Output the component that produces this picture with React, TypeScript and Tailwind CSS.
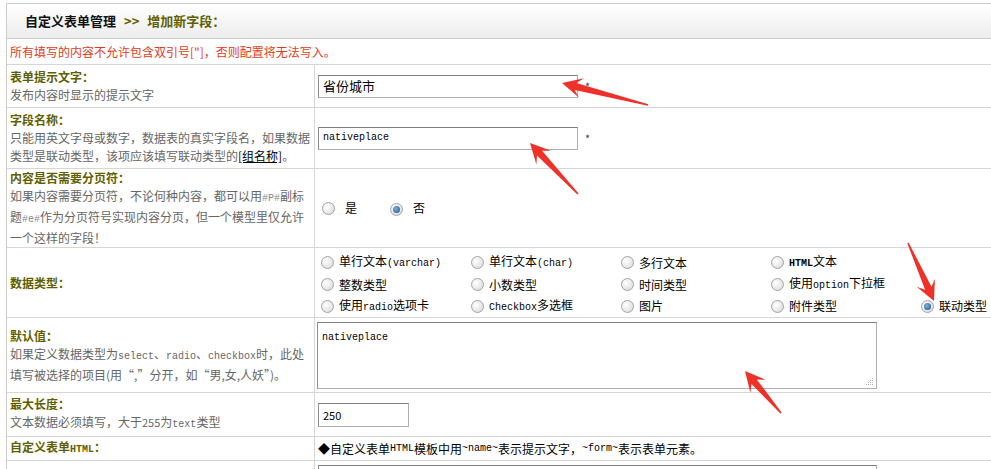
import type { ReactNode } from 'react';

const M = ({ children, className = '' }: { children: ReactNode; className?: string }) => (
    <span className={`font-['Liberation_Mono','DejaVu_Sans_Mono',monospace] text-[10px] ${className}`}>{children}</span>
);

function Radio({ checked = false }: { checked?: boolean }) {
    return (
        <span className="inline-flex w-[13px] h-[13px] rounded-full border border-[#a3a3a3] bg-[radial-gradient(circle_at_35%_35%,#ffffff,#d6d6d6)] items-center justify-center shrink-0">
            {checked && (
                <span className="w-[7px] h-[7px] rounded-full bg-[radial-gradient(circle_at_40%_40%,#7fb4e4,#174c82)]" />
            )}
        </span>
    );
}

function Label({ children }: { children: ReactNode }) {
    return <div className="font-bold text-[#5f5f00]">{children}</div>;
}

function Desc({ children }: { children: ReactNode }) {
    return <div className="text-[#666666]">{children}</div>;
}

function arrowPoints(tx: number, ty: number, hx: number, hy: number) {
    const dx = hx - tx;
    const dy = hy - ty;
    const len = Math.hypot(dx, dy);
    const ux = dx / len;
    const uy = dy / len;
    const px = -uy;
    const py = ux;
    const headLen = 20;
    const headW = 10;
    const neckBack = 14;
    const bx = hx - ux * headLen;
    const by = hy - uy * headLen;
    const nx = hx - ux * neckBack;
    const ny = hy - uy * neckBack;
    const pts = [
        [tx + px * 0.8, ty + py * 0.8],
        [nx + px * 3.5, ny + py * 3.5],
        [bx + px * headW, by + py * headW],
        [hx, hy],
        [bx - px * headW, by - py * headW],
        [nx - px * 3.5, ny - py * 3.5],
        [tx - px * 0.8, ty - py * 0.8],
    ];
    return pts.map((p) => `${p[0].toFixed(1)},${p[1].toFixed(1)}`).join(' ');
}

const arrows = [
    { tail: [648, 105], head: [562, 83] },
    { tail: [578, 194], head: [530, 143] },
    { tail: [908, 243], head: [934, 301] },
    { tail: [781, 413], head: [745, 371] },
];

const types: { text: ReactNode; checked?: boolean }[][] = [
    [
        { text: <>单行文本<M>(varchar)</M></> },
        { text: <>单行文本<M>(char)</M></> },
        { text: <>多行文本</> },
        { text: <><M className="font-bold">HTML</M>文本</> },
        { text: null },
    ],
    [
        { text: <>整数类型</> },
        { text: <>小数类型</> },
        { text: <>时间类型</> },
        { text: <>使用<M>option</M>下拉框</> },
        { text: null },
    ],
    [
        { text: <>使用<M>radio</M>选项卡</> },
        { text: <><M>Checkbox</M>多选框</> },
        { text: <>图片</> },
        { text: <>附件类型</> },
        { text: <>联动类型</>, checked: true },
    ],
];

export default function App() {
    return (
        <div className="relative w-[991px] h-[469px] overflow-hidden bg-white pt-[3px] pl-[6px] font-['Noto_Sans_CJK_SC','Noto_Sans',sans-serif] text-[12px] leading-[18px] text-black">
            <div className="w-[1000px] border-l border-t border-[#cccccc]">
                {/* header */}
                <div className="h-[35px] flex items-center pl-[18px] border-b border-[#cccccc] bg-[linear-gradient(#ffffff,#ececec)] text-[13px] font-bold">
                    <span className="text-[#111111]">自定义表单管理</span>
                    <span className="text-[#5f5f00] mx-[8px]">&gt;&gt;</span>
                    <span className="text-[#5f5f00]">增加新字段：</span>
                </div>

                <div className="h-[26px] flex items-center pl-[3px] border-b border-[#d6d6d6] text-[#e03c1c]">
                    所有填写的内容不允许包含双引号["]，否则配置将无法写入。
                </div>

                {/* row 1 */}
                <div className="h-[43px] flex border-b border-[#d6d6d6]">
                    <div className="w-[308px] shrink-0 border-r border-[#d6d6d6] pl-[3px] flex flex-col justify-center">
                        <Label>表单提示文字：</Label>
                        <Desc>发布内容时显示的提示文字</Desc>
                    </div>
                    <div className="flex-1 flex items-center pl-[3px] gap-[7px]">
                        <div className="w-[260px] h-[23px] border border-[#b0b0b0] border-t-[#7f7f7f] border-l-[#8f8f8f] px-[4px] flex items-center text-[13px]">
                            省份城市
                        </div>
                        <span className="text-[#444444] text-[11px]">*</span>
                    </div>
                </div>

                {/* row 2 */}
                <div className="h-[61px] flex border-b border-[#d6d6d6]">
                    <div className="w-[308px] shrink-0 border-r border-[#d6d6d6] pl-[3px] flex flex-col justify-center">
                        <Label>字段名称：</Label>
                        <Desc>
                            只能用英文字母或数字，数据表的真实字段名，如果数据
                            <br />
                            类型是联动类型，该项应该填写联动类型的<span className="text-black underline">[组名称]</span>。
                        </Desc>
                    </div>
                    <div className="flex-1 flex items-center pl-[3px] gap-[7px]">
                        <div className="w-[260px] h-[23px] border border-[#b0b0b0] border-t-[#7f7f7f] border-l-[#8f8f8f] px-[4px] flex items-center">
                            <M>nativeplace</M>
                        </div>
                        <span className="text-[#444444] text-[11px]">*</span>
                    </div>
                </div>

                {/* row 3 */}
                <div className="h-[79px] flex border-b border-[#d6d6d6]">
                    <div className="w-[308px] shrink-0 border-r border-[#d6d6d6] pl-[3px] flex flex-col justify-center">
                        <Label>内容是否需要分页符：</Label>
                        <Desc>
                            如果内容需要分页符，不论何种内容，都可以用<M className="text-[#888888]">#P#</M>副标
                            <br />
                            题<M className="text-[#888888]">#e#</M>作为分页符号实现内容分页，但一个模型里仅允许
                            <br />
                            一个这样的字段！
                        </Desc>
                    </div>
                    <div className="flex-1 flex items-center pl-[7px]">
                        <Radio />
                        <span className="ml-[10px]">是</span>
                        <span className="ml-[33px]"><Radio checked /></span>
                        <span className="ml-[10px]">否</span>
                    </div>
                </div>

                {/* row 4 */}
                <div className="h-[70px] flex border-b border-[#d6d6d6]">
                    <div className="w-[308px] shrink-0 border-r border-[#d6d6d6] pl-[3px] flex flex-col justify-center">
                        <Label>数据类型：</Label>
                    </div>
                    <div className="flex-1 flex flex-col justify-center pl-[6px] pt-[4px]">
                        {types.map((row, i) => (
                            <div key={i} className="grid grid-cols-[150px_150px_150px_150px_150px] h-[22px]">
                                {row.map((t, j) => (
                                    <div key={j} className="flex items-center gap-[5px]">
                                        {t.text !== null && (
                                            <>
                                                <Radio checked={t.checked} />
                                                <span>{t.text}</span>
                                            </>
                                        )}
                                    </div>
                                ))}
                            </div>
                        ))}
                    </div>
                </div>

                {/* row 5 */}
                <div className="h-[75px] flex border-b border-[#d6d6d6]">
                    <div className="w-[308px] shrink-0 border-r border-[#d6d6d6] pl-[3px] flex flex-col justify-center">
                        <Label>默认值：</Label>
                        <Desc>
                            如果定义数据类型为<M>select</M>、<M>radio</M>、<M>checkbox</M>时，此处
                            <br />
                            填写被选择的项目(用“,”分开，如“男,女,人妖”)。
                        </Desc>
                    </div>
                    <div className="flex-1 flex items-center pl-[2px]">
                        <div className="relative w-[560px] h-[67px] border border-[#b0b0b0] border-t-[#7f7f7f] border-l-[#8f8f8f] px-[4px] pt-[3px]">
                            <M>nativeplace</M>
                            <svg className="absolute right-[2px] bottom-[2px]" width="8" height="8" viewBox="0 0 8 8">
                                <g fill="#b5b5b5">
                                    <rect x="6" y="0" width="1" height="1" />
                                    <rect x="4" y="2" width="1" height="1" />
                                    <rect x="6" y="2" width="1" height="1" />
                                    <rect x="2" y="4" width="1" height="1" />
                                    <rect x="4" y="4" width="1" height="1" />
                                    <rect x="6" y="4" width="1" height="1" />
                                    <rect x="0" y="6" width="1" height="1" />
                                    <rect x="2" y="6" width="1" height="1" />
                                    <rect x="4" y="6" width="1" height="1" />
                                    <rect x="6" y="6" width="1" height="1" />
                                </g>
                            </svg>
                        </div>
                    </div>
                </div>

                {/* row 6 */}
                <div className="h-[44px] flex border-b border-[#d6d6d6]">
                    <div className="w-[308px] shrink-0 border-r border-[#d6d6d6] pl-[3px] flex flex-col justify-center">
                        <Label>最大长度：</Label>
                        <Desc>
                            文本数据必须填写，大于<span className="text-[11px]">255</span>为<M>text</M>类型
                        </Desc>
                    </div>
                    <div className="flex-1 flex items-center pl-[3px]">
                        <div className="w-[91px] h-[24px] border border-[#b0b0b0] border-t-[#7f7f7f] border-l-[#8f8f8f] px-[4px] flex items-center text-[11px]">
                            250
                        </div>
                    </div>
                </div>

                {/* row 7 */}
                <div className="h-[24px] flex border-b border-[#d6d6d6]">
                    <div className="w-[308px] shrink-0 border-r border-[#d6d6d6] pl-[3px] flex items-center">
                        <Label>
                            自定义表单<M className="font-bold">HTML</M>：
                        </Label>
                    </div>
                    <div className="flex-1 flex items-center pl-[3px]">
                        ◆自定义表单<M>HTML</M>模板中用<M>~name~</M>表示提示文字，<M>~form~</M>表示表单元素。
                    </div>
                </div>

                {/* row 8 */}
                <div className="h-[60px] flex">
                    <div className="w-[308px] shrink-0 border-r border-[#d6d6d6]" />
                    <div className="flex-1 pl-[3px] pt-[4px]">
                        <div className="w-[559px] h-[60px] border border-[#b0b0b0] border-t-[#7f7f7f] border-l-[#8f8f8f]" />
                    </div>
                </div>
            </div>

            <svg className="absolute left-0 top-0 pointer-events-none" width="991" height="469">
                {arrows.map((a, i) => (
                    <polygon key={i} points={arrowPoints(a.tail[0], a.tail[1], a.head[0], a.head[1])} fill="#ee3129" />
                ))}
            </svg>
        </div>
    );
}
